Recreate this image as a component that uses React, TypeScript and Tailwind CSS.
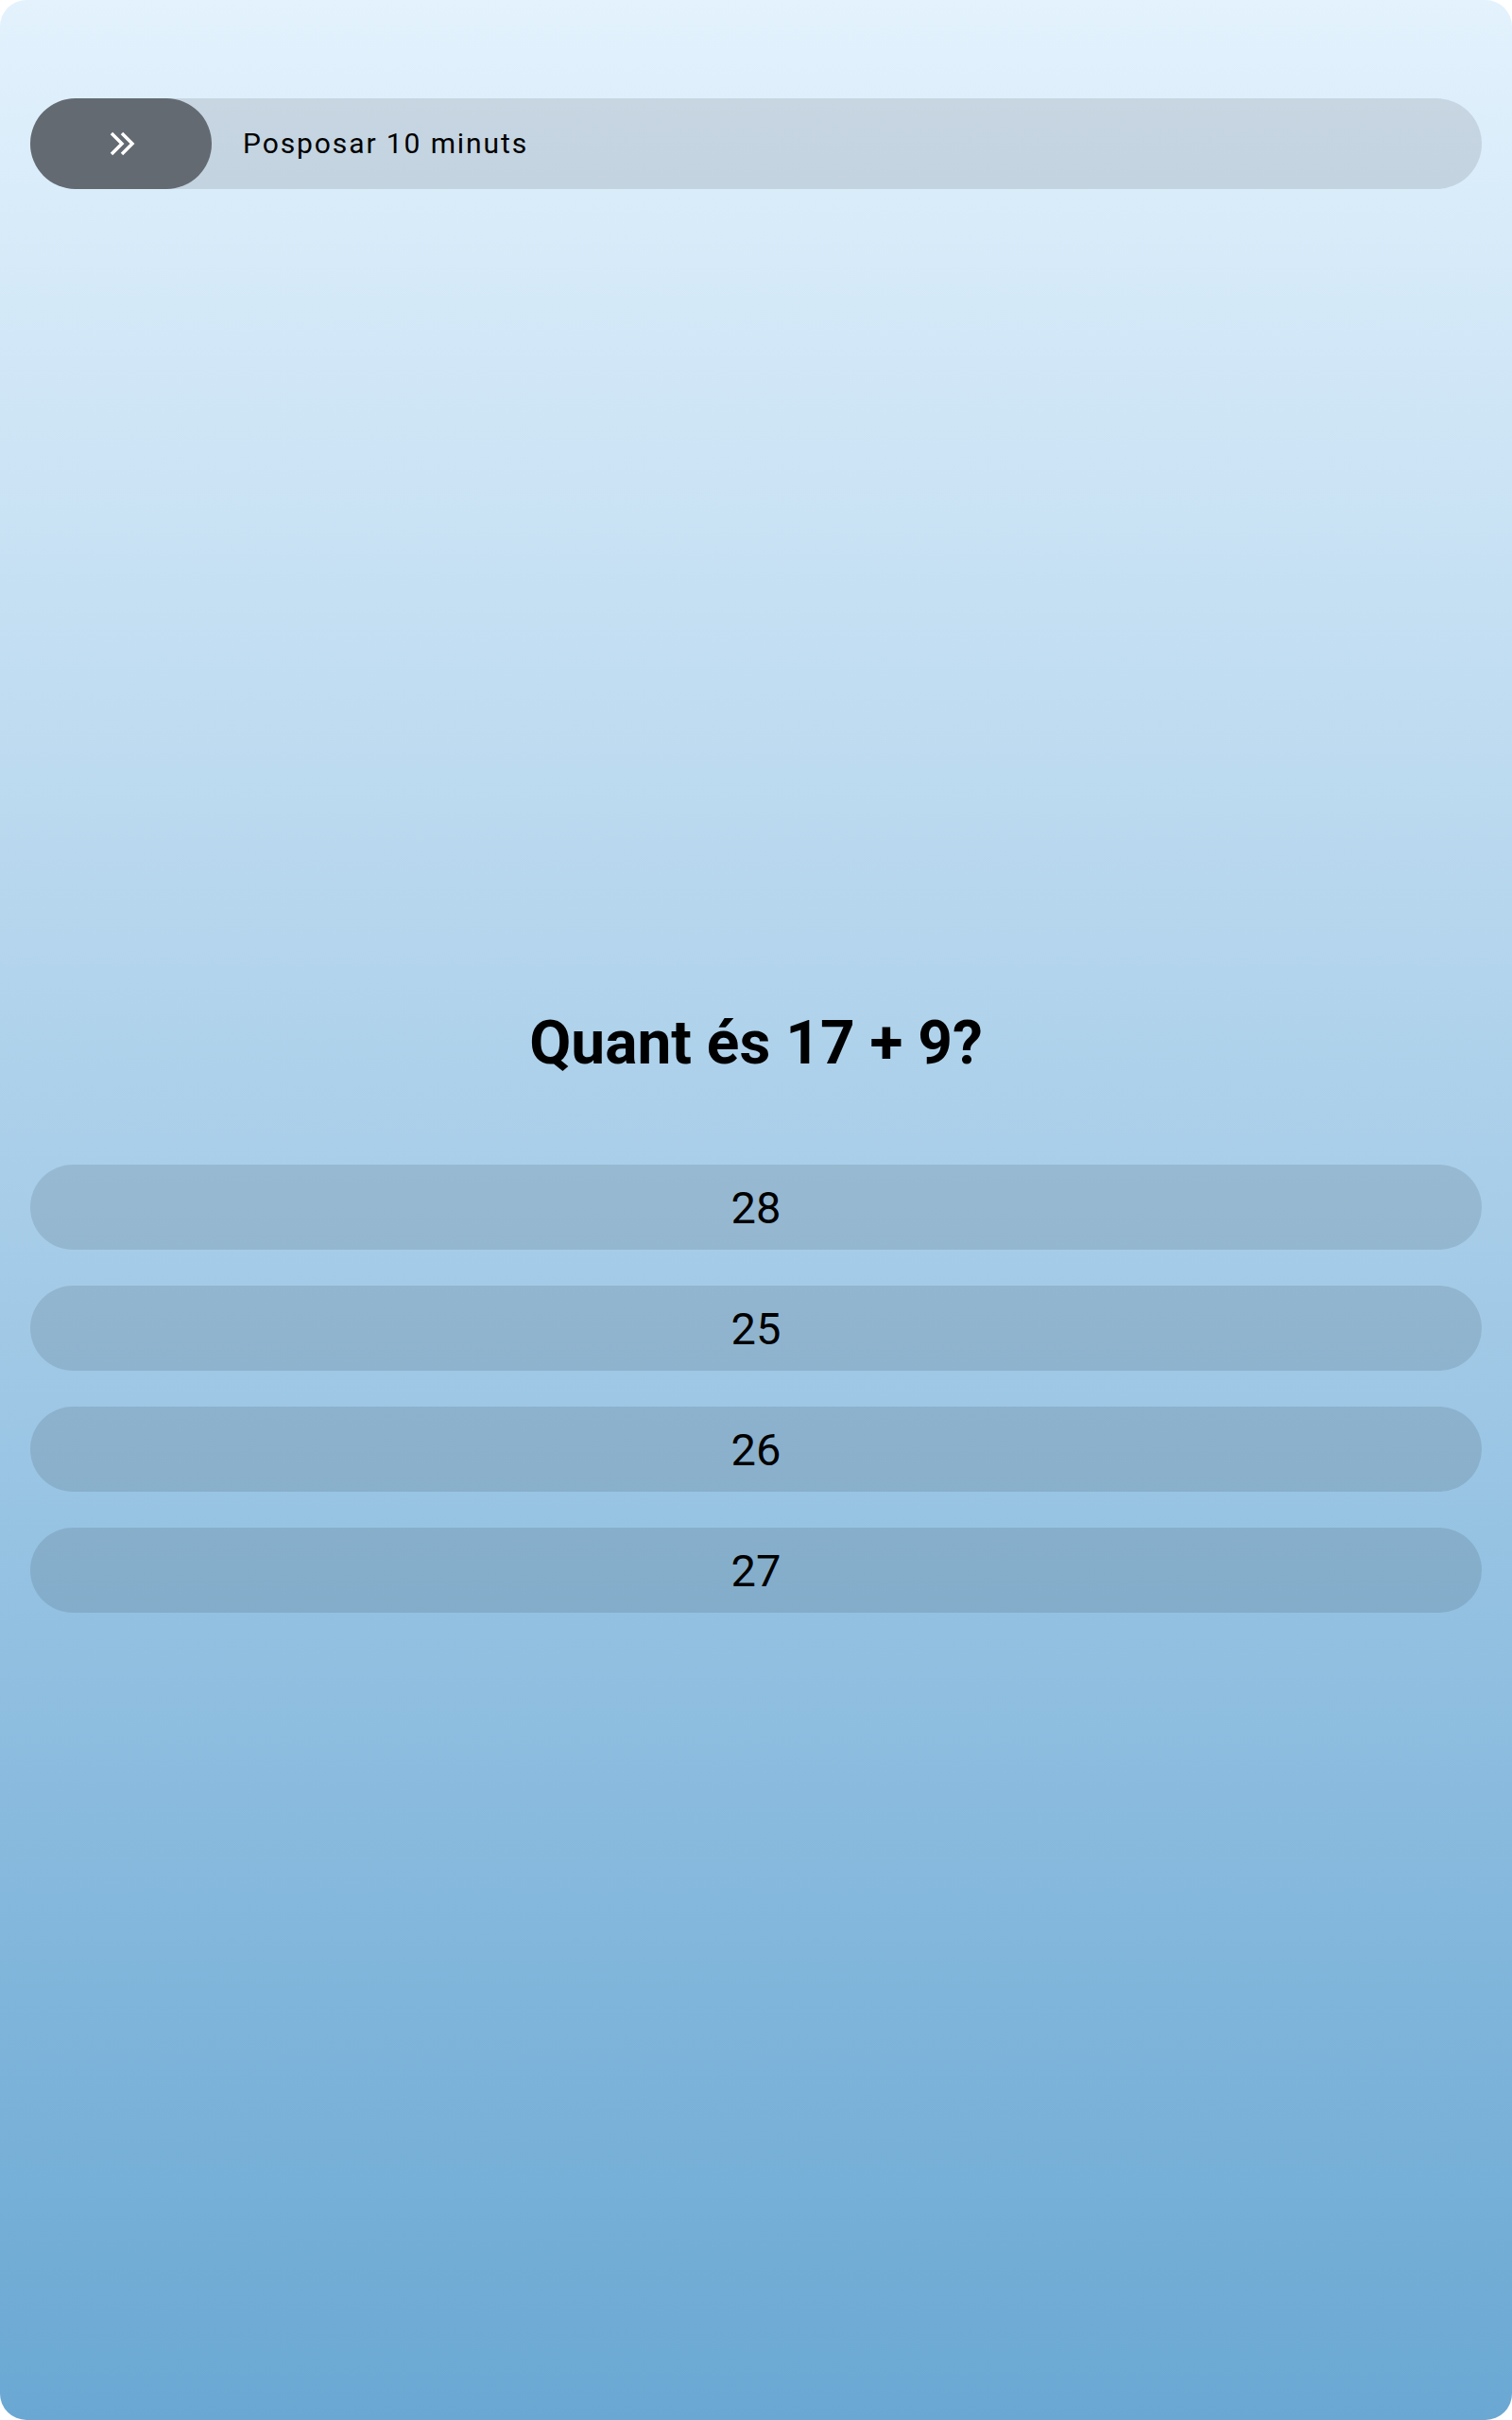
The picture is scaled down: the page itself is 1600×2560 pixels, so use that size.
import React from "react";

function Chevrons() {
  return (
    <svg width="30" height="26" viewBox="0 0 30 26" fill="none">
      <polyline points="4,2 15,13 4,24" stroke="white" strokeWidth="3.5" strokeLinejoin="miter" />
      <polyline points="15,2 26,13 15,24" stroke="white" strokeWidth="3.5" strokeLinejoin="miter" />
    </svg>
  );
}

export default function App() {
  const answers = ["28", "25", "26", "27"];
  return (
    <div className="w-[1600px] h-[2560px] bg-white" style={{ fontFamily: "Roboto, 'Noto Sans', sans-serif" }}>
      <div className="w-full h-full rounded-[28px] overflow-hidden bg-gradient-to-b from-[#e3f2fd] to-[#6aa8d3] px-[32px] pt-[104px] flex flex-col">
        <div className="h-[96px] w-full rounded-full bg-black/10 flex items-center">
          <div className="h-full w-[192px] rounded-full bg-[#636a72] flex items-center justify-center pl-[2px]">
            <Chevrons />
          </div>
          <span className="ml-[33px] text-[30px] tracking-[1.9px] text-black leading-none">Posposar 10 minuts</span>
        </div>
        <div className="mt-[872px] h-[64px] flex items-center justify-center text-[64px] leading-[64px] font-bold text-black">
          Quant és 17 + 9?
        </div>
        <div className="mt-[96px] flex flex-col gap-[38px]">
          {answers.map((a) => (
            <div key={a} className="h-[90px] w-full rounded-full bg-black/10 flex items-center justify-center text-[47px] font-normal leading-none text-black">
              {a}
            </div>
          ))}
        </div>
      </div>
    </div>
  );
}
